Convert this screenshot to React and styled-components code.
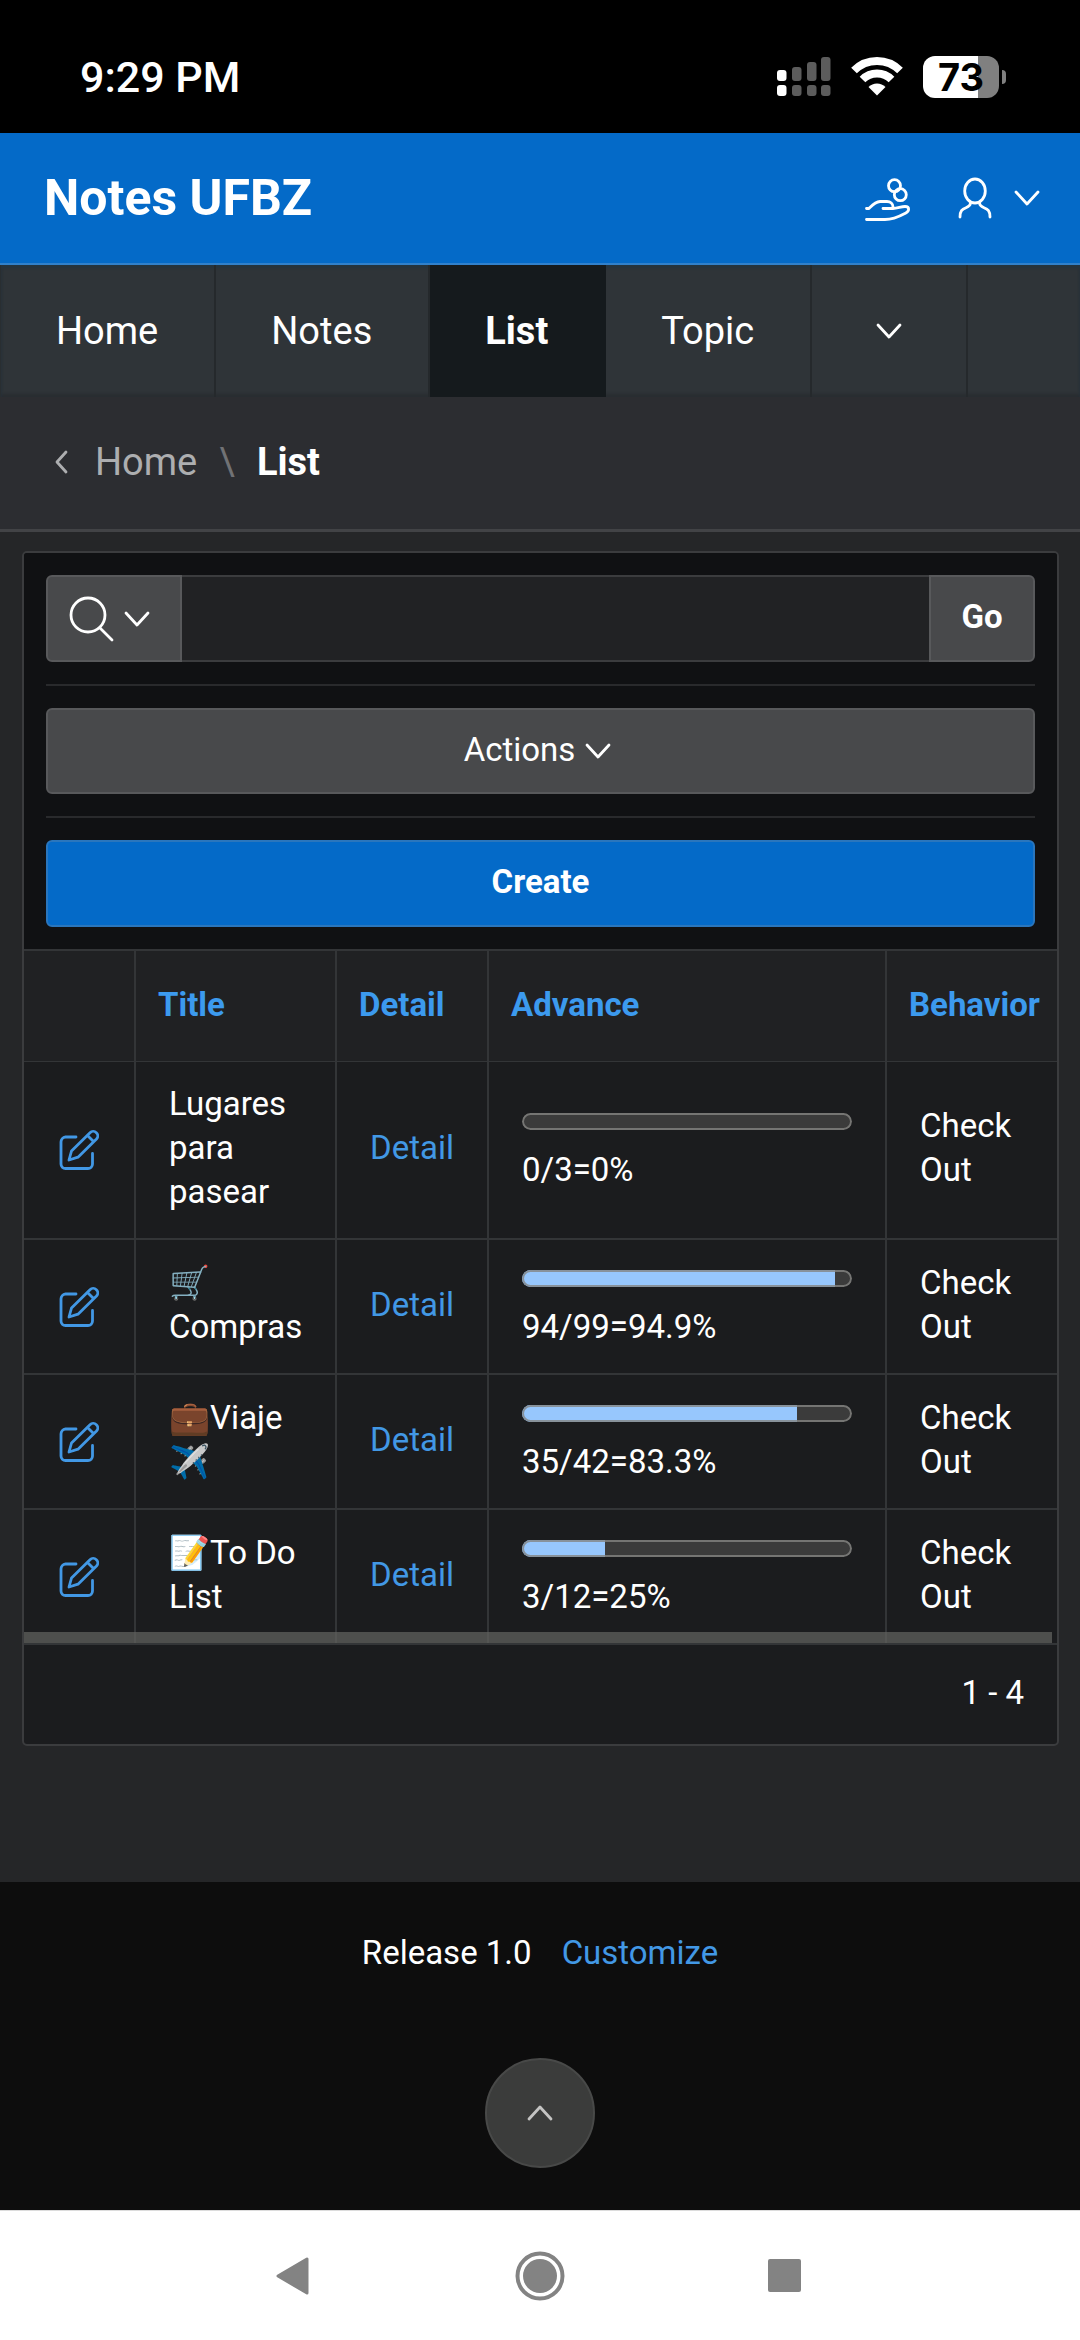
import React from "react";
import styled, { createGlobalStyle } from "styled-components";

const Global = createGlobalStyle`
  *, *::before, *::after { box-sizing: border-box; }
  html { background: #0d0d0d; }
  body { margin: 0; background: #252628; }
  body, button, input { font-family: Roboto, "Noto Color Emoji", "Liberation Sans", sans-serif; }
  button { margin: 0; padding: 0; border: 0; background: none; color: inherit; cursor: pointer; }
  a { color: inherit; text-decoration: none; }
  svg { display: block; flex: none; }
`;

const Page = styled.div`
  display: flex;
  flex-direction: column;
  min-height: 100vh;
  color: #fff;
  font-size: 33px;
  line-height: 44px;
  background: #252628;
`;

const StatusBar = styled.div`
  display: flex;
  align-items: center;
  justify-content: space-between;
  padding: 20px 74px 0 80px;
  height: 133px;
  background: #000;
`;
const Clock = styled.time`
  font-size: 43px;
  font-weight: 500;
`;
const StatusIcons = styled.div`
  display: flex;
  align-items: center;
  gap: 20px;
`;
const Battery = styled.div`
  display: flex;
  align-items: center;
  gap: 3px;
`;
const BatteryBody = styled.span`
  display: grid;
  place-items: center;
  width: 76px;
  height: 42px;
  border-radius: 12px;
  background: linear-gradient(90deg, #fff 73%, #808080 73%);
  color: #000;
  font: 700 38px/42px Inter, sans-serif;
`;
const BatteryTip = styled.span`
  width: 4px;
  height: 14px;
  border-radius: 0 8px 8px 0;
  background: #808080;
`;

const Header = styled.header`
  display: flex;
  align-items: center;
  justify-content: space-between;
  height: 132px;
  padding: 0 40px 0 44px;
  background: #046ac8;
  border-bottom: 2px solid #3181cc;
`;
const AppTitle = styled.a`
  font-size: 50px;
  line-height: 66px;
  font-weight: 700;
`;
const HeaderTools = styled.div`
  display: flex;
  align-items: center;
  gap: 48px;
`;
const ToolButton = styled.button`
  display: flex;
  align-items: center;
  gap: 22px;
  height: 88px;
`;

const Tabs = styled.nav`
  display: flex;
  height: 132px;
  background: #2f3438;
  border-left: 1px solid #292e31;
  box-shadow: inset 0 3px 3px #253440, inset 0 -3px 3px #292d31;
`;
const Tab = styled.a`
  display: flex;
  align-items: center;
  padding: 0 56px 0 55px;
  font-size: 38px;
  font-weight: ${(p) => (p.$active ? 700 : 400)};
  border-right: 2px solid ${(p) => (p.$active ? "#151a1d" : "#25292c")};
  ${(p) => p.$active && "background: #151a1d;"}
`;
const MoreTab = styled(Tab).attrs({ as: "button", type: "button" })`
  padding: 0 64px;
`;

const Breadcrumb = styled.nav`
  display: flex;
  align-items: center;
  height: 135px;
  padding: 0 55px 3px;
  gap: 22px;
  background: #2c2d31;
  border-bottom: 3px solid #424346;
  font-size: 38px;
`;
const Crumb = styled.a`
  padding-left: 5px;
  color: #adaeb0;
`;
const Slash = styled.span`
  color: #717275;
`;
const Current = styled.strong`
  font-weight: 700;
`;

const Main = styled.main`
  padding: 19px 21px 136px 22px;
`;
const Region = styled.section`
  border: 2px solid #3b3c3e;
  border-radius: 5px;
  background: #1b1c1e;
  overflow: hidden;
`;
const Toolbar = styled.div`
  display: flex;
  flex-direction: column;
  gap: 22px;
  padding: 22px;
  background: #101113;
  border-bottom: 2px solid #333537;
`;
const Divider = styled.hr`
  width: 100%;
  margin: 0;
  border: 0;
  border-top: 2px solid #292a2c;
`;
const Search = styled.form`
  display: flex;
  height: 87px;
`;
const SearchInput = styled.input`
  flex: 1;
  min-width: 0;
  padding: 0 22px;
  border: solid #3b3c3e;
  border-width: 2px 0;
  border-radius: 0;
  background: #212224;
  color: #fff;
  font-size: 33px;
  outline: none;
`;
const Button = styled.button`
  display: flex;
  align-items: center;
  justify-content: center;
  gap: 10px;
  height: 87px;
  border: 2px solid ${(p) => (p.$hot ? "#2a76bd" : "#58595b")};
  border-radius: ${(p) => p.$corners || "6px"};
  background: ${(p) => (p.$hot ? "#046ac8" : "#48494b")};
  font-size: 33px;
  line-height: 44px;
  font-weight: ${(p) => (p.$strong ? 700 : 400)};
`;
const ButtonLabel = styled.span`
  padding-bottom: 3px;
`;
const SearchMenu = styled(Button)`
  width: 136px;
  padding-right: 10px;
`;
const GoButton = styled(Button)`
  width: 106px;
`;
const ActionsButton = styled(Button)`
  height: 86px;
  padding-right: 6px;
`;

const Scroller = styled.div`
  position: relative;
  border-bottom: 2px solid #333537;
`;
const ScrollThumb = styled.div`
  position: absolute;
  left: 0;
  right: 5px;
  bottom: 0;
  height: 11px;
  background: rgba(100, 101, 97, 0.7);
`;
const Table = styled.table`
  width: 100%;
  table-layout: fixed;
  border-collapse: separate;
  border-spacing: 0;
`;
const Col = styled.col`
  width: ${(p) => (p.$w ? p.$w + "px" : "auto")};
`;
const Th = styled.th`
  height: 111px;
  padding: 0 0 3px 22px;
  text-align: left;
  font-weight: 700;
  color: #3c9aee;
  background: #202123;
  border-bottom: 1px solid #333537;
  border-right: 2px solid #333537;
  &:last-child { border-right: 0; }
`;
const Td = styled.td`
  height: 135px;
  padding: 20px 33px 24px;
  vertical-align: middle;
  border-bottom: 2px solid #333537;
  border-right: 2px solid #333537;
  &:last-child { border-right: 0; }
  tr:last-child & { border-bottom: 0; height: 133px; }
`;
const Link = styled.a`
  color: #4298e5;
`;
const Meter = styled.div`
  position: relative;
  height: 17px;
  margin: 9px 0 18px;
  border-radius: 9px;
  background: #3b3b3b;
  overflow: hidden;
  &::after {
    content: "";
    position: absolute;
    inset: 0;
    border: 2px solid rgba(132, 132, 130, 0.8);
    border-radius: 9px;
  }
`;
const MeterFill = styled.div`
  height: 100%;
  background: #97c7fd;
`;
const Pagination = styled.div`
  display: flex;
  align-items: center;
  justify-content: flex-end;
  height: 99px;
  padding: 0 33px 3px;
`;

const Footer = styled.footer`
  display: flex;
  flex-direction: column;
  align-items: center;
  gap: 83px;
  padding: 49px 0 42px;
  background: #0d0d0d;
`;
const FooterText = styled.div`
  display: flex;
  gap: 30px;
`;
const TopButton = styled.button`
  display: grid;
  place-items: center;
  width: 110px;
  height: 110px;
  border: 2px solid #484948;
  border-radius: 50%;
  background: #3b3c3b;
`;

const SystemNav = styled.nav`
  display: flex;
  flex: 1;
  justify-content: center;
  align-items: center;
  gap: 186px;
  min-height: 130px;
  background: #fff;
  border-top: 1px solid #dcdcdc;
`;

const chevrons = {
  down: { d: "M2 2l11 12L24 2", w: 26, h: 16 },
  up: { d: "M2 14L13 2l11 12", w: 26, h: 16 },
  left: { d: "M11 2L2 12l9 10", w: 13, h: 24 },
};
const Chevron = ({ dir = "down", color = "#fff" }) => {
  const { d, w, h } = chevrons[dir];
  return (
    <svg width={w} height={h} viewBox={`0 0 ${w} ${h}`} fill="none" stroke={color} strokeWidth="2.8" strokeLinecap="round" strokeLinejoin="round" aria-hidden="true">
      <path d={d} />
    </svg>
  );
};

const Signal = () => (
  <svg width="54" height="42" viewBox="0 0 54 42" aria-hidden="true">
    {[[0, 14, 11], [15, 11, 14], [30, 6, 19], [44, 1, 24]].map(([x, y, h], i) => (
      <g key={x} fill={i === 0 ? "#fff" : "#5c5c5c"}>
        <rect x={x} y={y} width="9.5" height={h} rx="3" />
        <rect x={x} y="29" width="9.5" height="11" rx="3" />
      </g>
    ))}
  </svg>
);

const Wifi = () => (
  <svg width="52" height="42" viewBox="0 0 52 42" aria-hidden="true">
    <g fill="none" stroke="#fff" strokeWidth="8">
      <path d="M3 14.5a32.5 32.5 0 0 1 46 0" />
      <path d="M11.5 23.5a20.5 20.5 0 0 1 29 0" />
    </g>
    <path d="M26 39.5l-8.5-8.500a12 12 0 0 1 17 0z" fill="#fff" />
  </svg>
);

const HandCoins = () => (
  <svg width="45" height="48" viewBox="0 0 45 48" fill="none" stroke="#fff" strokeWidth="2.8" strokeLinecap="round" strokeLinejoin="round" aria-hidden="true">
    <circle cx="29.5" cy="11.7" r="6" />
    <circle cx="35.3" cy="20.7" r="6" />
    <path d="M1.5 34.5H4c2.5-2.5 6-6.800 11-7h7c3.500 0 6 2 6 5.500" />
    <path d="M18 34.5h10c4.500 0 8-2 12-2 2.500 0 3.600 1 3.600 2.800 0 1.700-1 2.700-2.800 3.600C35 42 29 45.500 20 45.500H1.500" />
  </svg>
);

const User = () => (
  <svg width="34" height="48" viewBox="0 0 34 48" fill="none" stroke="#fff" strokeWidth="2.8" strokeLinecap="round" aria-hidden="true">
    <ellipse cx="17" cy="17" rx="10.300" ry="12" />
    <path d="M12.500 28.500c0 3-1.500 4-4.500 5.200-4 1.500-6 3.300-6 9.300M21.500 28.500c0 3 1.500 4 4.500 5.200 4 1.500 6 3.300 6 9.300" />
  </svg>
);

const Magnifier = () => (
  <svg width="45" height="46" viewBox="0 0 45 46" fill="none" stroke="#fff" strokeWidth="2.8" strokeLinecap="round" aria-hidden="true">
    <circle cx="19" cy="19" r="17" />
    <path d="M31 32l12 12" />
  </svg>
);

const EditIcon = () => (
  <svg width="40" height="40" viewBox="0 0 40 40" fill="none" stroke="#4298e5" strokeWidth="2.8" strokeLinecap="round" strokeLinejoin="round" aria-hidden="true">
    <path d="M17 7H6.500A5 5 0 0 0 2 12v22a4.500 4.500 0 0 0 4.500 4.500H29a4.500 4.500 0 0 0 4.500-4.500V23.500" />
    <path d="M10 30l2.500-9L31 2.800a4.400 4.400 0 0 1 6.500 6.200L19 27.200zM28.500 5.500l6 6" />
  </svg>
);

const EditLink = styled.a`
  display: flex;
  justify-content: center;
`;
const EditTd = styled(Td)`
  padding: 0;
`;
const NavButton = styled.button`
  display: grid;
  place-items: center;
  width: 60px;
  height: 60px;
`;

const rows = [
  { title: "Lugares para pasear", done: 0, total: 3, pct: "0" },
  { title: "🛒 Compras", done: 94, total: 99, pct: "94.9" },
  { title: "💼Viaje ✈️", done: 35, total: 42, pct: "83.3" },
  { title: "📝To Do List", done: 3, total: 12, pct: "25" },
];

export default function App() {
  return (
    <Page>
      <Global />
      <StatusBar>
        <Clock>9:29 PM</Clock>
        <StatusIcons>
          <Signal />
          <Wifi />
          <Battery>
            <BatteryBody>73</BatteryBody>
            <BatteryTip />
          </Battery>
        </StatusIcons>
      </StatusBar>

      <Header>
        <AppTitle href="#">Notes UFBZ</AppTitle>
        <HeaderTools>
          <ToolButton type="button" aria-label="Donate"><HandCoins /></ToolButton>
          <ToolButton type="button" aria-label="Account"><User /><Chevron /></ToolButton>
        </HeaderTools>
      </Header>

      <Tabs>
        <Tab href="#">Home</Tab>
        <Tab href="#">Notes</Tab>
        <Tab href="#" $active aria-current="page">List</Tab>
        <Tab href="#">Topic</Tab>
        <MoreTab aria-label="More"><Chevron /></MoreTab>
      </Tabs>

      <Breadcrumb aria-label="Breadcrumb">
        <Chevron dir="left" color="#adaeb0" />
        <Crumb href="#">Home</Crumb>
        <Slash>\</Slash>
        <Current>List</Current>
      </Breadcrumb>

      <Main>
        <Region>
          <Toolbar>
            <Search onSubmit={(e) => e.preventDefault()}>
              <SearchMenu type="button" aria-label="Search columns" $corners="6px 0 0 6px"><Magnifier /><Chevron /></SearchMenu>
              <SearchInput type="text" aria-label="Search" />
              <GoButton type="submit" $strong $corners="0 6px 6px 0"><ButtonLabel>Go</ButtonLabel></GoButton>
            </Search>
            <Divider />
            <ActionsButton type="button"><ButtonLabel>Actions</ButtonLabel><Chevron /></ActionsButton>
            <Divider />
            <Button type="button" $hot $strong><ButtonLabel>Create</ButtonLabel></Button>
          </Toolbar>
          <Scroller>
            <Table>
              <colgroup>
                <Col $w={112} /><Col $w={201} /><Col $w={152} /><Col $w={398} /><Col />
              </colgroup>
              <thead>
                <tr><Th aria-label="Edit" /><Th>Title</Th><Th>Detail</Th><Th>Advance</Th><Th>Behavior</Th></tr>
              </thead>
              <tbody>
                {rows.map((r) => (
                  <tr key={r.title}>
                    <EditTd><EditLink href="#" aria-label="Edit"><EditIcon /></EditLink></EditTd>
                    <Td>{r.title}</Td>
                    <Td><Link href="#">Detail</Link></Td>
                    <Td>
                      <Meter role="progressbar" aria-label="Advance" aria-valuenow={r.done} aria-valuemax={r.total}>
                        <MeterFill style={{ width: `${r.pct}%` }} />
                      </Meter>
                      {`${r.done}/${r.total}=${r.pct}%`}
                    </Td>
                    <Td>Check Out</Td>
                  </tr>
                ))}
              </tbody>
            </Table>
            <ScrollThumb />
          </Scroller>
          <Pagination>1 - 4</Pagination>
        </Region>
      </Main>

      <Footer>
        <FooterText><span>Release 1.0</span><Link href="#">Customize</Link></FooterText>
        <TopButton type="button" aria-label="Back to top"><Chevron dir="up" color="#c4c4c3" /></TopButton>
      </Footer>

      <SystemNav>
        <NavButton type="button" aria-label="Back">
          <svg width="36" height="40" viewBox="0 0 36 40"><path d="M2 20L31 3v34z" fill="#838383" stroke="#838383" strokeWidth="3" strokeLinejoin="round" /></svg>
        </NavButton>
        <NavButton type="button" aria-label="Home">
          <svg width="50" height="50" viewBox="0 0 50 50"><circle cx="25" cy="25" r="22.5" fill="none" stroke="#838383" strokeWidth="4" /><circle cx="25" cy="25" r="17" fill="#838383" /></svg>
        </NavButton>
        <NavButton type="button" aria-label="Recents">
          <svg width="36" height="34" viewBox="0 0 36 34"><rect x="0" y="0" width="33" height="33" rx="2" fill="#838383" /></svg>
        </NavButton>
      </SystemNav>
    </Page>
  );
}
